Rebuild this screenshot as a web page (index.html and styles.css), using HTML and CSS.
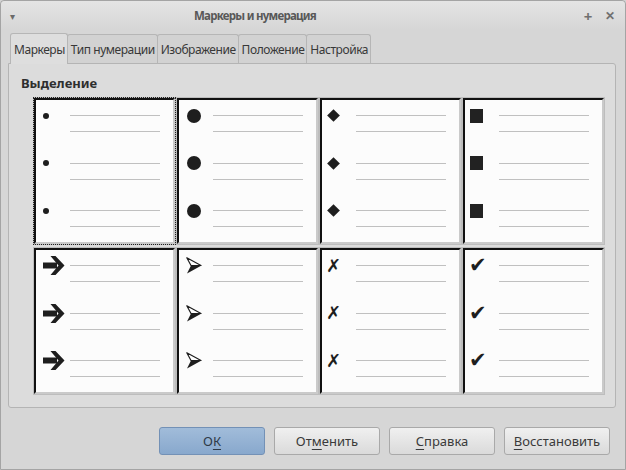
FILE: index.html
```html
<!DOCTYPE html>
<html lang="ru">
<head>
<meta charset="utf-8">
<link rel="stylesheet" href="styles.css">
</head>
<body>
<div class="window">
  <div class="titlebar">
    <span class="menu-arrow">▾</span>
    <span class="title">Маркеры и нумерация</span>
    <span class="spacer"></span>
    <span class="wbtn">+</span>
    <span class="wbtn close">✕</span>
  </div>
  <div class="tabs">
    <div class="tab active">Маркеры</div>
    <div class="tab">Тип нумерации</div>
    <div class="tab">Изображение</div>
    <div class="tab">Положение</div>
    <div class="tab">Настройка</div>
  </div>
  <div class="panel">
    <div class="section-title">Выделение</div>
    <div class="grid">
      <div class="cell sel">
        <div class="group"><span class="mark"><i class="dot"></i></span><span class="lines"><i></i><i></i></span></div>
        <div class="group"><span class="mark"><i class="dot"></i></span><span class="lines"><i></i><i></i></span></div>
        <div class="group"><span class="mark"><i class="dot"></i></span><span class="lines"><i></i><i></i></span></div>
      </div>
      <div class="cell">
        <div class="group"><span class="mark"><i class="circle"></i></span><span class="lines"><i></i><i></i></span></div>
        <div class="group"><span class="mark"><i class="circle"></i></span><span class="lines"><i></i><i></i></span></div>
        <div class="group"><span class="mark"><i class="circle"></i></span><span class="lines"><i></i><i></i></span></div>
      </div>
      <div class="cell">
        <div class="group"><span class="mark"><i class="diamond"></i></span><span class="lines"><i></i><i></i></span></div>
        <div class="group"><span class="mark"><i class="diamond"></i></span><span class="lines"><i></i><i></i></span></div>
        <div class="group"><span class="mark"><i class="diamond"></i></span><span class="lines"><i></i><i></i></span></div>
      </div>
      <div class="cell">
        <div class="group"><span class="mark"><i class="square"></i></span><span class="lines"><i></i><i></i></span></div>
        <div class="group"><span class="mark"><i class="square"></i></span><span class="lines"><i></i><i></i></span></div>
        <div class="group"><span class="mark"><i class="square"></i></span><span class="lines"><i></i><i></i></span></div>
      </div>
      <div class="cell">
        <div class="group"><span class="mark svgmark arrow"><svg width="22" height="19" viewBox="0 0 22 19"><rect x="0" y="6.5" width="14" height="6" fill="#1e1e1e"/><polygon points="7.5,0 12.5,0 21.5,9.5 12.5,19 7.5,19 15.5,9.5" fill="#1e1e1e"/></svg></span><span class="lines"><i></i><i></i></span></div>
        <div class="group"><span class="mark svgmark arrow"><svg width="22" height="19" viewBox="0 0 22 19"><rect x="0" y="6.5" width="14" height="6" fill="#1e1e1e"/><polygon points="7.5,0 12.5,0 21.5,9.5 12.5,19 7.5,19 15.5,9.5" fill="#1e1e1e"/></svg></span><span class="lines"><i></i><i></i></span></div>
        <div class="group"><span class="mark svgmark arrow"><svg width="22" height="19" viewBox="0 0 22 19"><rect x="0" y="6.5" width="14" height="6" fill="#1e1e1e"/><polygon points="7.5,0 12.5,0 21.5,9.5 12.5,19 7.5,19 15.5,9.5" fill="#1e1e1e"/></svg></span><span class="lines"><i></i><i></i></span></div>
      </div>
      <div class="cell">
        <div class="group"><span class="mark svgmark head"><svg width="16" height="17" viewBox="0 0 16 17"><polygon points="0.8,0.8 15,8.5 5,8.5" fill="#fff" stroke="#1e1e1e" stroke-width="1.2" stroke-linejoin="round"/><polygon points="5,8.5 15.5,8.5 1,16.5" fill="#1e1e1e"/></svg></span><span class="lines"><i></i><i></i></span></div>
        <div class="group"><span class="mark svgmark head"><svg width="16" height="17" viewBox="0 0 16 17"><polygon points="0.8,0.8 15,8.5 5,8.5" fill="#fff" stroke="#1e1e1e" stroke-width="1.2" stroke-linejoin="round"/><polygon points="5,8.5 15.5,8.5 1,16.5" fill="#1e1e1e"/></svg></span><span class="lines"><i></i><i></i></span></div>
        <div class="group"><span class="mark svgmark head"><svg width="16" height="17" viewBox="0 0 16 17"><polygon points="0.8,0.8 15,8.5 5,8.5" fill="#fff" stroke="#1e1e1e" stroke-width="1.2" stroke-linejoin="round"/><polygon points="5,8.5 15.5,8.5 1,16.5" fill="#1e1e1e"/></svg></span><span class="lines"><i></i><i></i></span></div>
      </div>
      <div class="cell">
        <div class="group"><span class="mark glyph cross">✗</span><span class="lines"><i></i><i></i></span></div>
        <div class="group"><span class="mark glyph cross">✗</span><span class="lines"><i></i><i></i></span></div>
        <div class="group"><span class="mark glyph cross">✗</span><span class="lines"><i></i><i></i></span></div>
      </div>
      <div class="cell">
        <div class="group"><span class="mark glyph check">✔</span><span class="lines"><i></i><i></i></span></div>
        <div class="group"><span class="mark glyph check">✔</span><span class="lines"><i></i><i></i></span></div>
        <div class="group"><span class="mark glyph check">✔</span><span class="lines"><i></i><i></i></span></div>
      </div>
    </div>
  </div>
  <div class="buttons">
    <button class="btn primary">О<u>К</u></button>
    <button class="btn">От<u>м</u>енить</button>
    <button class="btn"><u>С</u>правка</button>
    <button class="btn"><u>В</u>осстановить</button>
  </div>
</div>
</body>
</html>
```

FILE: styles.css
```css
* { box-sizing: border-box; }
html, body { margin: 0; padding: 0; }
body {
  width: 626px;
  height: 470px;
  overflow: hidden;
  font-family: "Noto Sans", "Open Sans", sans-serif;
  font-size: 13px;
  color: #333;
  background: #d4d4d4;
}
.window {
  width: 626px;
  height: 470px;
  border: 1px solid #a4a4a4;
  border-radius: 4px 4px 0 0;
  background: #d6d6d6;
  display: flex;
  flex-direction: column;
}
.titlebar {
  height: 29px;
  display: flex;
  align-items: center;
  background: linear-gradient(#e4e4e4, #d6d6d6);
  border-radius: 4px 4px 0 0;
  color: #5a5a5a;
}
.menu-arrow {
  font-size: 10px;
  margin-left: 9px;
  color: #6a6a6a;
  width: 12px;
}
.title {
  margin-left: 172px;
  font-weight: bold;
  font-size: 11.5px;
  letter-spacing: -0.75px;
  color: #585858;
}
.spacer { flex: 1; }
.wbtn {
  font-size: 15px;
  font-weight: bold;
  color: #707070;
  width: 22px;
  text-align: center;
}
.wbtn.close { font-size: 12px; margin-right: 4px; }
.tabs {
  display: flex;
  align-items: flex-end;
  height: 33px;
  margin-left: 9px;
  position: relative;
  z-index: 1;
}
.tab {
  height: 29px;
  padding: 0 2px 0 3px;
  display: flex;
  align-items: center;
  background: #d2d2d2;
  border: 1px solid #b6b6b6;
  border-bottom: none;
  border-radius: 3px 3px 0 0;
  margin-right: -1px;
  color: #383838;
  font-size: 12px;
  letter-spacing: -0.45px;
}
.tab.active {
  background: #dedede;
  margin-bottom: -1px;
  height: 31px;
}
.panel {
  margin: 0 9px 0 7px;
  height: 345px;
  background: #dcdcdc;
  border: 1px solid #b4b4b4;
  border-radius: 0 3px 3px 3px;
  padding: 10px 0 0 25px;
}
.section-title {
  font-weight: bold;
  font-size: 13px;
  color: #2e2e2e;
  margin-left: -13px;
  height: 24px;
}
.grid {
  display: grid;
  grid-template-columns: repeat(4, 141px);
  grid-template-rows: repeat(2, 146px);
  column-gap: 2px;
  row-gap: 4px;
}
.cell {
  background: #fcfcfc;
  border: 2px solid;
  border-color: #111 #cacaca #cacaca #111;
  box-shadow: 0 0 0 1px #bdbdbd;
  padding-top: 5px;
}
.cell.sel {
  outline: 1px dotted #222;
}
.group {
  display: flex;
  align-items: flex-start;
  height: 47.5px;
}
.mark {
  width: 34px;
  height: 21px;
  display: flex;
  align-items: center;
  color: #1e1e1e;
}
.lines {
  width: 90px;
  padding-top: 10px;
  display: flex;
  flex-direction: column;
  gap: 15px;
}
.lines i {
  display: block;
  height: 1px;
  background: #c0c0c0;
}
.dot {
  width: 6px;
  height: 6px;
  border-radius: 50%;
  background: #1e1e1e;
  margin-left: 7px;
}
.circle {
  width: 14px;
  height: 14px;
  border-radius: 50%;
  background: #1e1e1e;
  margin-left: 8px;
}
.diamond {
  width: 9px;
  height: 9px;
  background: #1e1e1e;
  transform: rotate(45deg);
  margin-left: 7px;
}
.square {
  width: 13px;
  height: 14px;
  background: #222;
  margin-left: 5px;
}
.svgmark svg { display: block; }
.arrow { padding-left: 7px; }
.head { padding-left: 7px; }
.glyph {
  font-family: "DejaVu Sans", sans-serif;
  line-height: 1;
}
.cross { font-size: 18px; padding-left: 4px; font-weight: bold; }
.check { font-size: 21px; padding-left: 4px; }
.buttons {
  display: flex;
  justify-content: flex-end;
  gap: 9px;
  padding: 19px 15px 0 0;
}
.btn {
  width: 106px;
  height: 28px;
  font-family: "Noto Sans", "Open Sans", sans-serif;
  font-size: 13px;
  color: #3a3a3a;
  border: 1px solid #a9a9a9;
  border-radius: 3px;
  background: linear-gradient(#f0f0f0, #dadada);
  padding: 0;
}
.btn.primary {
  background: linear-gradient(#a1bcda, #88a8cd);
  border-color: #7391b6;
  color: #2e3a48;
}
.btn u { text-decoration-thickness: 1px; text-underline-offset: 3px; }
```
